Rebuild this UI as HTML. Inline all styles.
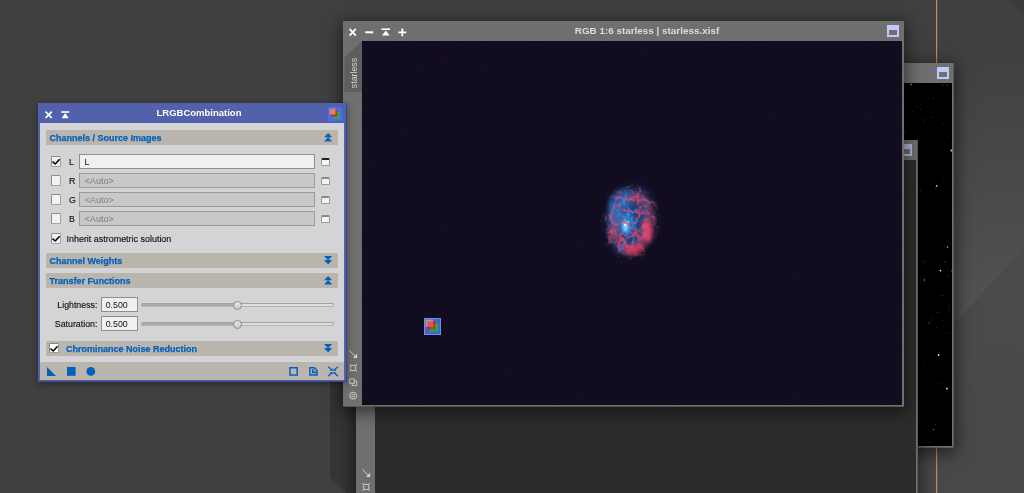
<!DOCTYPE html>
<html>
<head>
<meta charset="utf-8">
<title>LRGBCombination</title>
<style>
*{box-sizing:border-box;margin:0;padding:0}
html,body{width:1024px;height:493px;overflow:hidden;background:#404040;font-family:"Liberation Sans",sans-serif;}
.abs{position:absolute}
#stage{will-change:transform;position:absolute;left:0;top:0;width:1024px;height:493px;overflow:hidden;background:#404040}
/* ---------- background shapes ---------- */
#bgsvg{position:absolute;left:0;top:0}
/* ---------- image windows ---------- */
.win{position:absolute;background:#6f6f6f}
.wicon{position:absolute;width:12px;height:12px;background:#c3c9ff}
.wicon i{position:absolute;left:2px;top:5px;width:8px;height:5px;background:#6f6f6f}
/* ---------- LRGB panel ---------- */
#panel{position:absolute;left:38px;top:103px;width:309px;height:279px;background:#5261ab;box-shadow:0 2px 7px rgba(0,0,0,.38), inset -1px -1px 0 rgba(40,50,120,.55)}
#pbody{position:absolute;left:2px;top:20px;width:304px;height:239px;background:#d4d4d7}
#ptool{position:absolute;left:2px;top:259px;width:304px;height:18px;background:#bab6ae}
#ptitle{position:absolute;left:0;top:0;width:309px;height:20px;color:#fff;font-weight:bold;font-size:9.5px;line-height:20px;text-align:center;padding-left:13px}
.sec{-webkit-text-stroke:0.25px #0460be;position:absolute;left:6px;width:292px;height:14.5px;background:#bab6ae;color:#0460be;font-weight:bold;font-size:9px;line-height:16.8px;padding-left:3.5px;white-space:nowrap;overflow:visible}
.lbl{-webkit-text-stroke:0.14px #111;position:absolute;font-size:8.8px;line-height:12px;color:#111;white-space:nowrap}
.cb{position:absolute;width:10px;height:11px;border-radius:1.5px;background:#f2f2f2;border:1px solid #8c8c8c;border-right-color:#a4a4a4;border-bottom-color:#a4a4a4}
.inp{position:absolute;height:15px;border:1px solid #8e8e8e;background:#f0f0f0;font-size:8.8px;line-height:14.5px;color:#111;padding-left:4.5px;white-space:nowrap}
.inp.dis{background:#c8c8c8;border-color:#9a9a9a;color:#7e7e7e;font-size:9.1px}
.trk{position:absolute;height:4px;border:1px solid #a2a2a2;border-radius:2px;background:#dedede;border-bottom-color:#b4b4b4}
.trk b{position:absolute;left:0;top:0;height:2px;background:#a9a9a9;display:block}
.knob{position:absolute;width:9px;height:9px;border-radius:50%;border:1px solid #8f8f8f;background:linear-gradient(#e6e6e6,#c9c9c9)}
svg{display:block;overflow:visible}
</style>
</head>
<body>
<div id="stage">

<!-- background decorative shapes -->
<svg id="bgsvg" width="1024" height="493" viewBox="0 0 1024 493">
  <defs>
    <linearGradient id="gA" x1="0" x2="0" y1="0" y2="1">
      <stop offset="0" stop-color="#404040"/><stop offset=".12" stop-color="#404040"/><stop offset=".55" stop-color="#4b4b4b"/><stop offset="1" stop-color="#575757"/>
    </linearGradient>
    <linearGradient id="gB" x1="0" x2="0" y1="0" y2="1">
      <stop offset="0" stop-color="#4b4b4b"/><stop offset="1" stop-color="#484848"/>
    </linearGradient>
  </defs>
  <rect x="0" y="0" width="1024" height="493" fill="#404040"/>
  <!-- right side lighter zone above diagonal -->
  <polygon points="900,0 1024,0 1024,250 900,381" fill="url(#gA)"/>
  <!-- below diagonal -->
  <polygon points="900,381 1024,250 1024,493 900,493" fill="url(#gB)"/>
  <polygon points="1009,0 1024,0 1024,15" fill="#3a3a3a"/>
  <!-- lower-left dark band -->
  <polygon points="330,300 357,300 357,493 346,493 330,477" fill="#353535"/>
  <!-- orange guide line -->
  <rect x="936" y="0" width="1.2" height="493" fill="#c48e58"/>
</svg>


<!-- window 2 (back): stars image -->
<div class="win" id="w2" style="left:560px;top:63px;width:394px;height:385px;box-shadow:0 3px 16px 2px rgba(0,0,0,.55)">
  <div class="abs" id="w2img" style="left:20px;top:20px;width:372px;height:363px;background:#000;overflow:hidden">
    <svg id="stars" width="372" height="363" viewBox="0 0 372 363"><circle cx="371.5" cy="67.5" r="1.0" fill="#cfe0ff" opacity="0.95"/><circle cx="356.7" cy="103.0" r="1.0" fill="#a8c0ff" opacity="0.9"/><circle cx="367.6" cy="164.0" r="0.8" fill="#e0e0ff" opacity="0.8"/><circle cx="360.5" cy="187.6" r="0.9" fill="#fff" opacity="0.9"/><circle cx="344.4" cy="197.0" r="0.7" fill="#eee" opacity="0.8"/><circle cx="358.6" cy="272.0" r="0.9" fill="#fff" opacity="0.9"/><circle cx="366.9" cy="305.7" r="0.9" fill="#fff" opacity="0.9"/><circle cx="349.0" cy="240.0" r="0.6" fill="#ddd" opacity="0.7"/><circle cx="331.0" cy="1.5" r="0.8" fill="#ddd" opacity="0.8"/><circle cx="363.0" cy="2.0" r="0.5" fill="#bbb" opacity="0.6"/><circle cx="367.0" cy="2.5" r="0.5" fill="#bbb" opacity="0.6"/><circle cx="353.5" cy="346.5" r="0.6" fill="#ddd" opacity="0.7"/><circle cx="344.0" cy="179.0" r="0.5" fill="#fff" opacity="0.6"/><circle cx="365.0" cy="179.0" r="0.5" fill="#fff" opacity="0.5"/><circle cx="353.1" cy="269.3" r="0.5" fill="#c8c8c8" opacity="0.16"/><circle cx="360.8" cy="90.4" r="0.3" fill="#ffffff" opacity="0.51"/><circle cx="340.6" cy="315.2" r="0.45" fill="#ffb0b8" opacity="0.37"/><circle cx="334.5" cy="265.4" r="0.45" fill="#ffffff" opacity="0.26"/><circle cx="360.3" cy="57.9" r="0.3" fill="#ffb0b8" opacity="0.21"/><circle cx="344.2" cy="48.0" r="0.3" fill="#d8e0ff" opacity="0.23"/><circle cx="370.0" cy="60.2" r="0.35" fill="#d8e0ff" opacity="0.27"/><circle cx="349.0" cy="246.1" r="0.35" fill="#a8c0ff" opacity="0.22"/><circle cx="331.8" cy="350.3" r="0.45" fill="#ffd8d8" opacity="0.27"/><circle cx="342.7" cy="339.7" r="0.4" fill="#ffd8d8" opacity="0.18"/><circle cx="362.9" cy="212.8" r="0.5" fill="#ffd8d8" opacity="0.42"/><circle cx="325.3" cy="129.0" r="0.4" fill="#ffd8d8" opacity="0.34"/><circle cx="331.2" cy="171.5" r="0.35" fill="#ffffff" opacity="0.17"/><circle cx="369.5" cy="129.8" r="0.45" fill="#ffffff" opacity="0.16"/><circle cx="342.9" cy="136.6" r="0.3" fill="#a8c0ff" opacity="0.33"/><circle cx="331.0" cy="346.7" r="0.35" fill="#d8e0ff" opacity="0.20"/><circle cx="368.5" cy="342.0" r="0.4" fill="#ffb0b8" opacity="0.35"/><circle cx="334.5" cy="168.0" r="0.5" fill="#ffffff" opacity="0.45"/><circle cx="340.4" cy="107.4" r="0.45" fill="#ffffff" opacity="0.53"/><circle cx="332.4" cy="186.2" r="0.4" fill="#ffd8d8" opacity="0.52"/><circle cx="335.8" cy="255.0" r="0.3" fill="#ffd8d8" opacity="0.27"/><circle cx="337.3" cy="290.0" r="0.35" fill="#ffd8d8" opacity="0.44"/><circle cx="371.8" cy="58.6" r="0.3" fill="#ffb0b8" opacity="0.18"/><circle cx="348.7" cy="147.3" r="0.35" fill="#ffd8d8" opacity="0.45"/><circle cx="363.3" cy="165.4" r="0.45" fill="#a8c0ff" opacity="0.21"/><circle cx="323.6" cy="179.2" r="0.35" fill="#a8c0ff" opacity="0.20"/><circle cx="350.2" cy="48.2" r="0.45" fill="#c8c8c8" opacity="0.19"/><circle cx="340.6" cy="21.3" r="0.45" fill="#c8c8c8" opacity="0.27"/><circle cx="368.1" cy="225.2" r="0.35" fill="#c8c8c8" opacity="0.54"/><circle cx="370.0" cy="250.0" r="0.4" fill="#ffd8d8" opacity="0.34"/><circle cx="345.5" cy="327.4" r="0.3" fill="#ffb0b8" opacity="0.30"/><circle cx="370.0" cy="227.6" r="0.45" fill="#d8e0ff" opacity="0.50"/><circle cx="326.5" cy="98.8" r="0.5" fill="#ffd8d8" opacity="0.50"/><circle cx="325.2" cy="288.6" r="0.4" fill="#a8c0ff" opacity="0.43"/><circle cx="323.7" cy="111.0" r="0.5" fill="#ffd8d8" opacity="0.43"/><circle cx="363.8" cy="96.1" r="0.4" fill="#ffd8d8" opacity="0.53"/><circle cx="354.5" cy="210.8" r="0.3" fill="#ffffff" opacity="0.34"/><circle cx="334.5" cy="243.8" r="0.45" fill="#ffb0b8" opacity="0.27"/><circle cx="354.4" cy="289.5" r="0.4" fill="#ffd8d8" opacity="0.26"/><circle cx="358.9" cy="300.6" r="0.4" fill="#d8e0ff" opacity="0.52"/><circle cx="365.5" cy="249.9" r="0.4" fill="#ffb0b8" opacity="0.53"/><circle cx="329.1" cy="355.8" r="0.35" fill="#ffffff" opacity="0.48"/><circle cx="345.9" cy="251.0" r="0.45" fill="#ffffff" opacity="0.22"/><circle cx="368.8" cy="187.5" r="0.45" fill="#ffb0b8" opacity="0.27"/><circle cx="360.7" cy="231.2" r="0.3" fill="#ffb0b8" opacity="0.23"/><circle cx="344.1" cy="236.0" r="0.35" fill="#d8e0ff" opacity="0.45"/><circle cx="353.5" cy="15.2" r="0.45" fill="#d8e0ff" opacity="0.54"/><circle cx="324.7" cy="48.5" r="0.4" fill="#c8c8c8" opacity="0.54"/><circle cx="331.7" cy="12.9" r="0.45" fill="#a8c0ff" opacity="0.29"/><circle cx="352.6" cy="214.2" r="0.35" fill="#ffd8d8" opacity="0.44"/><circle cx="322.0" cy="147.2" r="0.4" fill="#ffffff" opacity="0.49"/><circle cx="327.8" cy="301.8" r="0.4" fill="#ffb0b8" opacity="0.54"/><circle cx="352.7" cy="34.4" r="0.5" fill="#ffb0b8" opacity="0.36"/><circle cx="336.7" cy="127.6" r="0.35" fill="#ffffff" opacity="0.32"/><circle cx="350.2" cy="195.4" r="0.45" fill="#ffb0b8" opacity="0.21"/><circle cx="341.1" cy="173.2" r="0.35" fill="#ffb0b8" opacity="0.54"/><circle cx="326.5" cy="298.1" r="0.3" fill="#ffd8d8" opacity="0.30"/><circle cx="350.3" cy="223.3" r="0.35" fill="#ffb0b8" opacity="0.28"/><circle cx="340.8" cy="156.7" r="0.35" fill="#c8c8c8" opacity="0.35"/><circle cx="370.6" cy="137.9" r="0.35" fill="#ffd8d8" opacity="0.39"/><circle cx="359.1" cy="109.2" r="0.4" fill="#ffd8d8" opacity="0.32"/><circle cx="369.3" cy="111.6" r="0.4" fill="#ffffff" opacity="0.21"/><circle cx="328.1" cy="225.7" r="0.45" fill="#ffffff" opacity="0.25"/><circle cx="361.1" cy="300.1" r="0.3" fill="#ffb0b8" opacity="0.34"/><circle cx="335.7" cy="339.5" r="0.3" fill="#ffd8d8" opacity="0.25"/><circle cx="364.2" cy="261.9" r="0.4" fill="#ffb0b8" opacity="0.27"/><circle cx="371.6" cy="188.1" r="0.5" fill="#ffffff" opacity="0.50"/><circle cx="322.8" cy="45.7" r="0.4" fill="#ffd8d8" opacity="0.36"/><circle cx="352.7" cy="265.5" r="0.3" fill="#ffd8d8" opacity="0.34"/><circle cx="356.1" cy="295.0" r="0.35" fill="#ffd8d8" opacity="0.16"/><circle cx="349.7" cy="248.9" r="0.3" fill="#ffb0b8" opacity="0.51"/><circle cx="331.6" cy="156.0" r="0.45" fill="#a8c0ff" opacity="0.39"/><circle cx="357.4" cy="229.5" r="0.45" fill="#ffffff" opacity="0.49"/><circle cx="341.3" cy="142.2" r="0.35" fill="#c8c8c8" opacity="0.51"/><circle cx="363.5" cy="24.0" r="0.3" fill="#c8c8c8" opacity="0.43"/><circle cx="351.1" cy="235.4" r="0.45" fill="#d8e0ff" opacity="0.51"/><circle cx="330.3" cy="252.4" r="0.45" fill="#ffb0b8" opacity="0.54"/><circle cx="329.7" cy="212.7" r="0.3" fill="#d8e0ff" opacity="0.18"/><circle cx="335.4" cy="30.9" r="0.3" fill="#ffffff" opacity="0.42"/><circle cx="338.7" cy="155.8" r="0.3" fill="#a8c0ff" opacity="0.55"/><circle cx="346.3" cy="44.8" r="0.3" fill="#a8c0ff" opacity="0.24"/><circle cx="363.2" cy="40.3" r="0.35" fill="#a8c0ff" opacity="0.55"/><circle cx="367.9" cy="54.4" r="0.5" fill="#ffffff" opacity="0.22"/><circle cx="330.1" cy="225.9" r="0.3" fill="#a8c0ff" opacity="0.37"/><circle cx="341.0" cy="26.1" r="0.3" fill="#ffffff" opacity="0.38"/><circle cx="359.1" cy="318.9" r="0.35" fill="#ffffff" opacity="0.15"/><circle cx="337.7" cy="217.9" r="0.45" fill="#a8c0ff" opacity="0.29"/><circle cx="340.7" cy="20.2" r="0.4" fill="#a8c0ff" opacity="0.21"/><circle cx="355.9" cy="105.4" r="0.5" fill="#d8e0ff" opacity="0.37"/><circle cx="335.2" cy="200.3" r="0.4" fill="#ffd8d8" opacity="0.48"/><circle cx="347.8" cy="48.6" r="0.35" fill="#c8c8c8" opacity="0.50"/><circle cx="358.8" cy="65.1" r="0.3" fill="#ffffff" opacity="0.41"/><circle cx="350.7" cy="13.0" r="0.3" fill="#c8c8c8" opacity="0.35"/><circle cx="333.9" cy="318.3" r="0.45" fill="#ffffff" opacity="0.54"/><circle cx="361.8" cy="10.7" r="0.45" fill="#d8e0ff" opacity="0.17"/><circle cx="369.2" cy="155.8" r="0.35" fill="#ffffff" opacity="0.45"/><circle cx="370.6" cy="241.4" r="0.35" fill="#ffb0b8" opacity="0.21"/><circle cx="340.8" cy="303.4" r="0.4" fill="#ffb0b8" opacity="0.28"/><circle cx="357.3" cy="289.0" r="0.45" fill="#ffffff" opacity="0.20"/><circle cx="339.9" cy="107.4" r="0.45" fill="#ffd8d8" opacity="0.53"/><circle cx="347.9" cy="215.1" r="0.5" fill="#d8e0ff" opacity="0.24"/><circle cx="341.8" cy="35.2" r="0.3" fill="#d8e0ff" opacity="0.22"/><circle cx="324.0" cy="322.8" r="0.45" fill="#ffd8d8" opacity="0.41"/><circle cx="322.0" cy="170.7" r="0.5" fill="#ffd8d8" opacity="0.52"/><circle cx="345.3" cy="36.2" r="0.35" fill="#ffffff" opacity="0.41"/><circle cx="340.7" cy="140.0" r="0.45" fill="#ffd8d8" opacity="0.21"/><circle cx="327.5" cy="297.1" r="0.4" fill="#ffffff" opacity="0.42"/><circle cx="346.1" cy="11.7" r="0.4" fill="#ffffff" opacity="0.28"/><circle cx="356.4" cy="244.6" r="0.45" fill="#d8e0ff" opacity="0.49"/><circle cx="327.9" cy="242.7" r="0.4" fill="#d8e0ff" opacity="0.33"/><circle cx="358.5" cy="59.3" r="0.35" fill="#ffb0b8" opacity="0.44"/><circle cx="333.5" cy="28.4" r="0.45" fill="#a8c0ff" opacity="0.51"/><circle cx="340.2" cy="113.2" r="0.45" fill="#ffffff" opacity="0.29"/><circle cx="358.6" cy="260.6" r="0.35" fill="#d8e0ff" opacity="0.46"/><circle cx="355.6" cy="341.4" r="0.5" fill="#ffd8d8" opacity="0.32"/><circle cx="322.3" cy="22.1" r="0.45" fill="#ffffff" opacity="0.22"/><circle cx="349.4" cy="359.2" r="0.5" fill="#ffffff" opacity="0.38"/><circle cx="357.8" cy="86.0" r="0.45" fill="#c8c8c8" opacity="0.19"/><circle cx="324.7" cy="88.4" r="0.3" fill="#ffffff" opacity="0.35"/><circle cx="325.0" cy="92.7" r="0.45" fill="#a8c0ff" opacity="0.33"/><circle cx="324.6" cy="13.7" r="0.35" fill="#ffb0b8" opacity="0.22"/><circle cx="354.0" cy="68.3" r="0.35" fill="#ffd8d8" opacity="0.18"/><circle cx="361.5" cy="31.5" r="0.35" fill="#ffffff" opacity="0.39"/><circle cx="358.5" cy="226.9" r="0.45" fill="#c8c8c8" opacity="0.37"/><circle cx="343.2" cy="278.8" r="0.5" fill="#a8c0ff" opacity="0.40"/><circle cx="322.6" cy="274.5" r="0.45" fill="#d8e0ff" opacity="0.51"/><circle cx="349.7" cy="50.4" r="0.45" fill="#ffffff" opacity="0.19"/><circle cx="335.2" cy="146.1" r="0.35" fill="#ffffff" opacity="0.20"/><circle cx="345.6" cy="253.1" r="0.45" fill="#a8c0ff" opacity="0.54"/><circle cx="334.3" cy="22.3" r="0.35" fill="#d8e0ff" opacity="0.17"/><circle cx="361.8" cy="320.4" r="0.3" fill="#ffffff" opacity="0.18"/><circle cx="337.7" cy="273.1" r="0.5" fill="#ffd8d8" opacity="0.15"/><circle cx="354.7" cy="275.8" r="0.5" fill="#d8e0ff" opacity="0.16"/><circle cx="362.8" cy="237.9" r="0.3" fill="#a8c0ff" opacity="0.44"/><circle cx="343.4" cy="38.7" r="0.45" fill="#ffd8d8" opacity="0.37"/><circle cx="325.3" cy="61.5" r="0.4" fill="#ffd8d8" opacity="0.35"/><circle cx="336.3" cy="23.1" r="0.5" fill="#ffffff" opacity="0.16"/><circle cx="324.5" cy="47.2" r="0.4" fill="#ffd8d8" opacity="0.32"/><circle cx="369.5" cy="222.2" r="0.35" fill="#d8e0ff" opacity="0.36"/><circle cx="340.1" cy="119.9" r="0.3" fill="#ffb0b8" opacity="0.22"/><circle cx="363.3" cy="263.8" r="0.3" fill="#ffb0b8" opacity="0.26"/><circle cx="330.6" cy="257.5" r="0.45" fill="#c8c8c8" opacity="0.46"/><circle cx="361.7" cy="42.9" r="0.4" fill="#d8e0ff" opacity="0.33"/><circle cx="345.0" cy="157.6" r="0.45" fill="#a8c0ff" opacity="0.17"/><circle cx="368.8" cy="193.3" r="0.45" fill="#ffffff" opacity="0.39"/><circle cx="328.3" cy="308.7" r="0.3" fill="#ffffff" opacity="0.23"/><circle cx="323.6" cy="209.4" r="0.45" fill="#ffd8d8" opacity="0.43"/><circle cx="341.6" cy="78.3" r="0.4" fill="#ffd8d8" opacity="0.48"/><circle cx="350.1" cy="129.6" r="0.35" fill="#ffffff" opacity="0.30"/><circle cx="334.4" cy="356.6" r="0.3" fill="#c8c8c8" opacity="0.40"/></svg>
  </div>
  <div class="wicon" style="left:377px;top:4px"><i></i></div>
  <div class="abs" style="left:393px;top:0;width:1px;height:385px;background:rgba(25,25,25,.2)"></div>
  <div class="abs" style="left:0;top:384px;width:394px;height:1px;background:rgba(25,25,25,.25)"></div>
</div>

<!-- window 3 (middle): dark gray image -->
<div class="win" id="w3" style="left:356px;top:140px;width:562px;height:400px;box-shadow:0 3px 16px 2px rgba(0,0,0,.55)">
  <div class="abs" style="left:19px;top:20px;width:541px;height:380px;background:#2c2c2c"></div>
  <div class="wicon" style="left:544px;top:4px;opacity:.8"><i></i></div>
  <div class="abs" style="left:561px;top:0;width:1px;height:400px;background:rgba(25,25,25,.22)"></div>
  <svg class="abs" style="left:6px;top:329px" width="9" height="24" viewBox="0 0 9 24" fill="none" stroke="#d2d2d2" stroke-width="0.9">
    <path d="M0.4 0.5 L7.6 7.7"/>
    <path d="M4 7.9 H8.1 V3.6 Z" fill="#d2d2d2" stroke="none"/>
    <path d="M1.7 15.4 H6.7 V20.5 H1.7 Z M0.3 14 L1.7 15.4 M8.1 14 L6.7 15.4 M0.3 21.9 L1.7 20.5 M8.1 21.9 L6.7 20.5"/>
  </svg>
</div>

<!-- main window (front) -->
<div class="win" id="w1" style="left:343px;top:21px;width:561px;height:386px;box-shadow:0 3px 16px 2px rgba(0,0,0,.55)">
  <div class="abs" id="w1img" style="left:19px;top:20px;width:540px;height:364px;background:#0e0c1c;overflow:hidden">
    <svg id="neb" width="540" height="364" viewBox="0 0 540 364">
      <defs>
        <filter id="b4" x="-50%" y="-50%" width="200%" height="200%"><feGaussianBlur stdDeviation="4"/></filter>
        <filter id="b2" x="-50%" y="-50%" width="200%" height="200%"><feGaussianBlur stdDeviation="2.2"/></filter>
        <filter id="b1" x="-50%" y="-50%" width="200%" height="200%"><feGaussianBlur stdDeviation="1"/></filter>
        <filter id="b0" x="-50%" y="-50%" width="200%" height="200%"><feGaussianBlur stdDeviation="0.6"/></filter>
        <filter id="fRed" x="-30%" y="-30%" width="160%" height="160%" color-interpolation-filters="sRGB">
          <feGaussianBlur in="SourceAlpha" stdDeviation="3.5" result="m"/>
          <feTurbulence type="turbulence" baseFrequency="0.085" numOctaves="3" seed="11" result="t"/>
          <feColorMatrix in="t" type="matrix" values="0 0 0 0 0.95  0 0 0 0 0.27  0 0 0 0 0.40  -6 0 0 0 1.45" result="c"/>
          <feComposite in="c" in2="m" operator="in" result="o"/>
          <feGaussianBlur in="o" stdDeviation="0.75"/>
        </filter>
        <filter id="fBlue" x="-30%" y="-30%" width="160%" height="160%" color-interpolation-filters="sRGB">
          <feGaussianBlur in="SourceAlpha" stdDeviation="3" result="m"/>
          <feTurbulence type="turbulence" baseFrequency="0.11" numOctaves="3" seed="3" result="t"/>
          <feColorMatrix in="t" type="matrix" values="0 0 0 0 0.22  0 0 0 0 0.52  0 0 0 0 0.88  0 -7 0 0 1.5" result="c"/>
          <feComposite in="c" in2="m" operator="in" result="o"/>
          <feGaussianBlur in="o" stdDeviation="0.6"/>
        </filter>
        <filter id="nz" x="0" y="0" width="100%" height="100%" color-interpolation-filters="sRGB">
          <feTurbulence type="fractalNoise" baseFrequency="0.55" numOctaves="2" seed="7" result="t"/>
          <feColorMatrix type="matrix" values="0.16 0 0 0 -0.07  0 0.05 0 0 -0.025  0 0 0.16 0 -0.068  0 0 0 0 1"/>
        </filter>
      </defs>
      <rect x="0" y="0" width="540" height="364" filter="url(#nz)" style="mix-blend-mode:screen"/>
      <g transform="translate(-362,-41)">
        <!-- base glow -->
        <ellipse cx="631" cy="221" rx="23" ry="34" fill="#17305c" filter="url(#b4)" transform="rotate(8 631 221)"/>
        <ellipse cx="630" cy="221" rx="20" ry="30" fill="#244f8c" filter="url(#b2)" opacity=".6" transform="rotate(8 630 221)"/>
        <ellipse cx="632" cy="223" rx="17" ry="27" fill="none" stroke="#c83a5c" stroke-width="9" filter="url(#b2)" opacity=".5" transform="rotate(8 632 223)"/>
        <ellipse cx="620" cy="203" rx="11" ry="14" fill="#2a64ac" filter="url(#b2)" opacity=".7" transform="rotate(30 620 203)"/>
        <!-- blue textured body -->
        <ellipse cx="630" cy="221" rx="22" ry="33" fill="#fff" filter="url(#fBlue)" transform="rotate(8 630 221)"/>
        <!-- blue core -->
        <ellipse cx="626" cy="224" rx="8" ry="11" fill="#3a8ada" filter="url(#b2)" opacity=".7"/>
        <ellipse cx="614" cy="215" rx="5" ry="12" fill="#2e78c8" filter="url(#b2)" opacity=".6"/>
        <ellipse cx="625.5" cy="226" rx="3" ry="6" fill="#8fd0ff" filter="url(#b1)" opacity=".9"/>
        <!-- red filaments -->
        <ellipse cx="631" cy="222" rx="25" ry="36" fill="#fff" filter="url(#fRed)" opacity=".85" transform="rotate(8 631 222)"/>
        <!-- pink/red masses -->
        <ellipse cx="647" cy="231" rx="4.5" ry="12" fill="#ff4668" filter="url(#b2)" opacity=".8" transform="rotate(-8 647 231)"/>
        <ellipse cx="634" cy="249" rx="10" ry="5" fill="#e83c5c" filter="url(#b2)" opacity=".7" transform="rotate(-20 634 249)"/>
        <ellipse cx="612" cy="233" rx="4" ry="7" fill="#d8405e" filter="url(#b2)" opacity=".5"/>
        <circle cx="625.3" cy="225" r="1.2" fill="#e8f4ff"/>
        <circle cx="628.5" cy="222" r=".7" fill="#e8f4ff"/>
      </g>
      <!-- small process icon dropped on the image -->
      <g transform="translate(62,277)">
        <rect x="0" y="0" width="17" height="17" fill="#4862d0"/>
        <rect x="0.5" y="0.5" width="16" height="16" fill="none" stroke="#6f8fe0" stroke-width="1"/>
        <rect x="6" y="5.5" width="8" height="8" fill="#10b838"/>
        <rect x="3.5" y="3.5" width="8" height="8" fill="#b04818"/>
        <rect x="1.5" y="1.5" width="7.5" height="7" fill="#a89884"/>
        <rect x="3.5" y="3.5" width="5.5" height="5" fill="#d85070"/>
        <rect x="3.5" y="9" width="2.5" height="2" fill="#d81830"/>
        <rect x="9" y="3.5" width="2.5" height="2" fill="#d81830"/>
      </g>
    </svg>
  </div>
  <div class="abs" style="left:0;top:385px;width:561px;height:1px;background:rgba(25,25,25,.28)"></div>
  <!-- title -->
  <div class="abs" style="left:0;top:0;width:561px;height:20px;text-align:center;color:#dcdcdc;font-weight:bold;font-size:9.9px;line-height:20px;padding-left:47px">RGB 1:6 starless | starless.xisf</div>
  <!-- title buttons -->
  <svg class="abs" style="left:6px;top:7px" width="60" height="9" viewBox="0 0 60 9" fill="none" stroke="#fff" stroke-width="1.7">
    <path d="M0.6 0.9 L6.8 7.6 M6.8 0.9 L0.6 7.6"/>
    <path d="M16.3 4.3 H24.2" stroke-width="2"/>
    <path d="M32.5 1.2 H41.1" stroke-width="1.6"/>
    <path d="M36.8 2.4 L40.6 7.6 H33 Z" fill="#fff" stroke="none"/>
    <path d="M49.3 4.3 H57.3 M53.3 0.4 V8.2" stroke-width="1.8"/>
  </svg>
  <div class="wicon" style="left:544px;top:4px"><i></i></div>
  <!-- side tab -->
  <svg class="abs" style="left:0;top:20px" width="19" height="52" viewBox="0 0 19 52">
    <polygon points="19,0 19,51 1.5,51 1.5,16.5" fill="#5e5e5e"/>
  </svg>
  <div class="abs" style="left:0;top:20px;width:19px;height:52px">
    <div class="abs" style="left:-11.5px;top:26.2px;width:44px;height:12px;transform:rotate(-90deg);transform-origin:center;font-size:8.8px;line-height:12px;color:#d4d4d4;text-align:center">starless</div>
  </div>
  <!-- side icons -->
  <svg class="abs" style="left:6px;top:329px" width="9" height="51" viewBox="0 0 9 51" fill="none" stroke="#d2d2d2" stroke-width="0.9">
    <path d="M0.4 0.5 L7.6 7.7"/>
    <path d="M4 7.9 H8.1 V3.6 Z" fill="#d2d2d2" stroke="none"/>
    <path d="M1.7 15.4 H6.7 V20.5 H1.7 Z M0.3 14 L1.7 15.4 M8.1 14 L6.7 15.4 M0.3 21.9 L1.7 20.5 M8.1 21.9 L6.7 20.5"/>
    <path d="M0.7 28.9 H5.3 V33.3 H0.7 Z M5.3 31 H7.7 V35.5 H3.2 V33.3"/>
    <circle cx="4.2" cy="45.7" r="3.5"/><circle cx="4.2" cy="45.7" r="1.5"/>
  </svg>
</div>

<!-- LRGBCombination panel -->
<div id="panel">
  <div id="ptitle">LRGBCombination</div>
  <svg class="abs" style="left:6.6px;top:8px" width="32" height="8" viewBox="0 0 32 8" fill="none" stroke="#fff" stroke-width="1.7">
    <path d="M0.6 0.7 L6.8 7 M6.8 0.7 L0.6 7"/>
    <path d="M16.2 1 H24.2" stroke-width="1.6"/>
    <path d="M20.2 2 L23.8 7.2 H16.6 Z" fill="#fff" stroke="none"/>
  </svg>
  <!-- process icon -->
  <svg class="abs" style="left:290px;top:4px" width="14" height="14" viewBox="0 0 14 14">
    <rect x="0" y="0" width="14" height="14" fill="#4a6cf0"/>
    <rect x="5" y="5" width="6.5" height="6.5" fill="#10c030"/>
    <rect x="3" y="3" width="6.5" height="6.5" fill="#d03010"/>
    <rect x="1.5" y="1.5" width="6" height="6" fill="#d98078"/>
  </svg>
  <div id="pbody">
    <div class="sec" style="top:7px">Channels / Source Images<svg class="abs" style="left:278.2px;top:2.7px" width="8.2" height="8.4" viewBox="0 0 8.2 8.4" fill="#0460be"><path d="M4.1 0 L8.2 4.3 H0 Z M4.1 4.1 L8.2 8.4 H0 Z"/></svg></div>

    <div class="cb" style="left:11px;top:33px"><svg class="abs" style="left:0;top:0" width="8" height="8" viewBox="0 0 8 8" fill="none" stroke="#000" stroke-width="1.55" stroke-linejoin="round"><path d="M0.5 4.7 L3.2 7 L7.6 2.3"/></svg></div>
    <div class="lbl" style="left:29px;top:32.5px">L</div>
    <div class="inp" style="left:39px;top:31px;width:236px">L</div>
    <div class="abs" style="left:281px;top:34.5px;width:9px;height:8px;border:1px solid #9a9a9a;border-radius:1.5px;background:#f4f4f4;border-top:2px solid #222"></div>

    <div class="cb" style="left:11px;top:52px"></div>
    <div class="lbl" style="left:29px;top:51.5px">R</div>
    <div class="inp dis" style="left:39px;top:50px;width:236px">&lt;Auto&gt;</div>
    <div class="abs" style="left:281px;top:53.5px;width:9px;height:8px;border:1px solid #9a9a9a;border-radius:1.5px;background:#f4f4f4;border-top:2px solid #8a8a8a"></div>

    <div class="cb" style="left:11px;top:71px"></div>
    <div class="lbl" style="left:29px;top:70.5px">G</div>
    <div class="inp dis" style="left:39px;top:69px;width:236px">&lt;Auto&gt;</div>
    <div class="abs" style="left:281px;top:72.5px;width:9px;height:8px;border:1px solid #9a9a9a;border-radius:1.5px;background:#f4f4f4;border-top:2px solid #8a8a8a"></div>

    <div class="cb" style="left:11px;top:90px"></div>
    <div class="lbl" style="left:29px;top:89.5px">B</div>
    <div class="inp dis" style="left:39px;top:88px;width:236px">&lt;Auto&gt;</div>
    <div class="abs" style="left:281px;top:91.5px;width:9px;height:8px;border:1px solid #9a9a9a;border-radius:1.5px;background:#f4f4f4;border-top:2px solid #8a8a8a"></div>

    <div class="cb" style="left:11px;top:110px"><svg class="abs" style="left:0;top:0" width="8" height="8" viewBox="0 0 8 8" fill="none" stroke="#000" stroke-width="1.55" stroke-linejoin="round"><path d="M0.5 4.7 L3.2 7 L7.6 2.3"/></svg></div>
    <div class="lbl" style="left:26.5px;top:109.5px;font-size:8.95px">Inherit astrometric solution</div>

    <div class="sec" style="top:130px">Channel Weights<svg class="abs" style="left:278.2px;top:2.9px" width="8.2" height="8.4" viewBox="0 0 8.2 8.4" fill="#0460be"><path d="M0 0 H8.2 L4.1 4.3 Z M0 4.1 H8.2 L4.1 8.4 Z"/></svg></div>
    <div class="sec" style="top:150px">Transfer Functions<svg class="abs" style="left:278.2px;top:2.7px" width="8.2" height="8.4" viewBox="0 0 8.2 8.4" fill="#0460be"><path d="M4.1 0 L8.2 4.3 H0 Z M4.1 4.1 L8.2 8.4 H0 Z"/></svg></div>

    <div class="lbl" style="left:0;top:175.7px;width:57.4px;text-align:right">Lightness:</div>
    <div class="inp" style="left:61px;top:174px;width:37px;padding-left:3.7px">0.500</div>
    <div class="trk" style="left:101px;top:180px;width:193px"><b style="width:96px"></b></div>
    <div class="knob" style="left:192.5px;top:177.5px"></div>

    <div class="lbl" style="left:0;top:194.7px;width:57.4px;text-align:right">Saturation:</div>
    <div class="inp" style="left:61px;top:193px;width:37px;padding-left:3.7px">0.500</div>
    <div class="trk" style="left:101px;top:199px;width:193px"><b style="width:96px"></b></div>
    <div class="knob" style="left:192.5px;top:196.5px"></div>

    <div class="sec" style="top:218px;padding-left:20px">Chrominance Noise Reduction<svg class="abs" style="left:278.2px;top:2.9px" width="8.2" height="8.4" viewBox="0 0 8.2 8.4" fill="#0460be"><path d="M0 0 H8.2 L4.1 4.3 Z M0 4.1 H8.2 L4.1 8.4 Z"/></svg>
      <div class="cb" style="left:3px;top:2px;height:10.4px;background:#fff;border-color:#858585 #9a9a9a #9a9a9a #858585"><svg class="abs" style="left:0;top:0" width="8" height="8" viewBox="0 0 8 8" fill="none" stroke="#000" stroke-width="1.55" stroke-linejoin="round"><path d="M0.5 4.7 L3.2 7 L7.6 2.3"/></svg></div>
    </div>
  </div>
  <div id="ptool">
    <svg class="abs" style="left:7px;top:5px" width="50" height="9" viewBox="0 0 50 9" fill="#0460be">
      <path d="M0 0 V9 H9 Z"/>
      <rect x="20" y="0" width="8.6" height="8.8"/>
      <circle cx="43.8" cy="4.4" r="4.4"/>
    </svg>
    <svg class="abs" style="left:249px;top:4px" width="51" height="11" viewBox="0 0 51 11" fill="none" stroke="#0460be" stroke-width="1.5">
      <rect x="1" y="1.75" width="7.2" height="7.3"/>
      <path d="M20.9 1.75 H25.3 L28.1 4.6 V9.05 H20.9 Z"/>
      <path d="M23.8 3.2 V6.4 H27.2" stroke-width="1.6"/>
      <path d="M39.2 0.6 L43 4.3 M48.9 0.6 L45.1 4.3 M39.2 10.2 L43 6.5 M48.9 10.2 L45.1 6.5" stroke-width="1.3"/>
      <path d="M41 4.9 H43.6 V2.3 Z M47.1 4.9 H44.5 V2.3 Z M41 5.9 H43.6 V8.5 Z M47.1 5.9 H44.5 V8.5 Z" fill="#0460be" stroke="none"/>
    </svg>
  </div>
</div>

</div>
</body>
</html>
